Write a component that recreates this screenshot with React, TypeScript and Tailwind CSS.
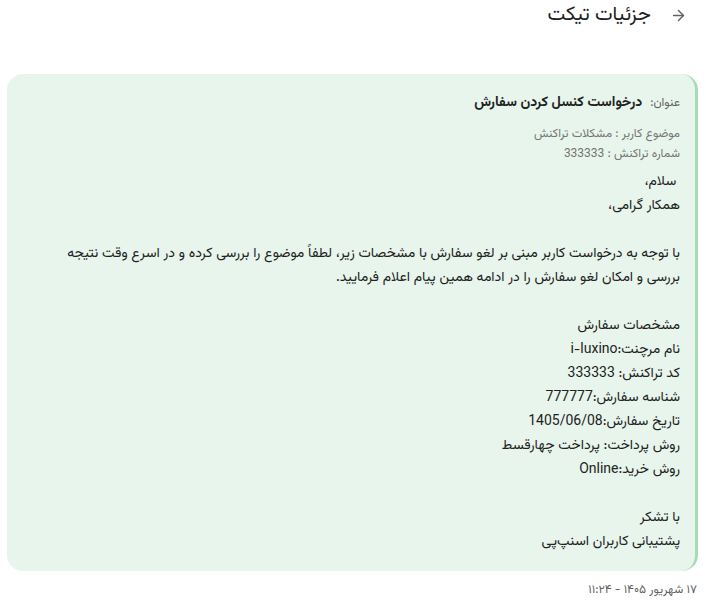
import React from "react";
import { ArrowRight } from "lucide-react";

const lines = [
  " سلام،",
  "همکار گرامی،",
  "",
  "با توجه به درخواست کاربر مبنی بر لغو سفارش با مشخصات زیر، لطفاً موضوع را بررسی کرده و در اسرع وقت نتیجه بررسی و امکان لغو سفارش را در ادامه همین پیام اعلام فرمایید.",
  "",
  "مشخصات سفارش",
  "نام مرچنت:i-luxino",
  "کد تراکنش: 333333",
  "شناسه سفارش:777777",
  "تاریخ سفارش:1405/06/08",
  "روش پرداخت: پرداخت چهارقسط",
  "روش خرید:Online",
  "",
  "با تشکر",
  "پشتیبانی کاربران اسنپ‌پی",
];

export default function App() {
  return (
    <div dir="rtl" className="w-[706px] min-h-[601px] bg-white text-[#212121] font-[Vazirmatn,Roboto,sans-serif]">
      <div className="flex items-center gap-[19px] pr-[19px] pt-[2px] h-[28px]">
        <ArrowRight className="w-[17px] h-[17px] text-[#5f6368]" strokeWidth={2} />
        <h1 className="text-[20px] leading-[28px] text-[#212121]">جزئیات تیکت</h1>
      </div>
      <div className="mt-[46px] mr-[8px] ml-[7px] rounded-[16px] bg-[#e8f5ec] border-r-[3px] border-[#a5dcb6] pr-[15px] pl-[30px] pt-[19px] pb-[17px]">
        <div className="flex items-baseline gap-[8px]">
          <span className="text-[12px] text-[#616161]">عنوان:</span>
          <span className="text-[14px] font-bold text-[#212121]">درخواست کنسل کردن سفارش</span>
        </div>
        <div className="mt-[10px] text-[12px] leading-[20px] text-[#757575]">
          <div>موضوع کاربر : مشکلات تراکنش</div>
          <div>شماره تراکنش : 333333</div>
        </div>
        <div className="mt-[6px] text-[14px] leading-[24px] text-[#212121] whitespace-pre-wrap">
          {lines.map((l, i) => (
            <div key={i} className="min-h-[24px]">{l}</div>
          ))}
        </div>
      </div>
      <div className="pr-[9px] mt-[9px] text-[12px] leading-[20px] text-[#616161]">۱۷ شهریور ۱۴۰۵ - ۱۱:۲۴</div>
    </div>
  );
}
